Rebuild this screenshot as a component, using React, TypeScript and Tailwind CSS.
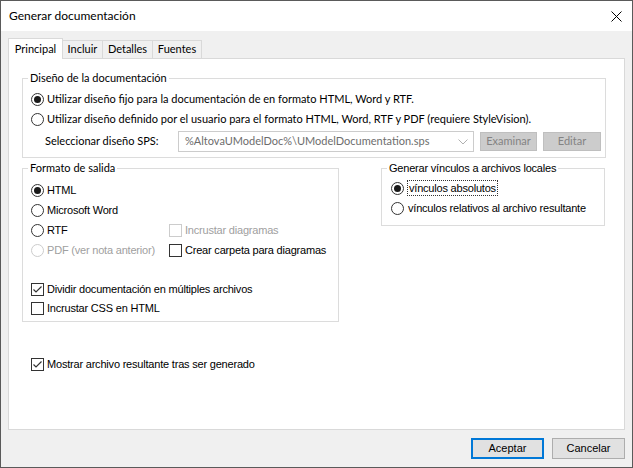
const seg = "font-['Lato',sans-serif] text-[11px]";
const ms = "font-['Liberation_Sans',Arial,sans-serif] text-[11px] tracking-[-0.2px]";

function Radio({ checked = false, disabled = false }: { checked?: boolean; disabled?: boolean }) {
  return (
    <span
      className={`flex items-center justify-center w-[13px] h-[13px] rounded-full border bg-white shrink-0 ${
        disabled ? "border-[#cccccc]" : "border-[#333333]"
      }`}
    >
      {checked && <span className="w-[7px] h-[7px] rounded-full bg-[#1a1a1a]" />}
    </span>
  );
}

function Check({ checked = false, disabled = false }: { checked?: boolean; disabled?: boolean }) {
  return (
    <span
      className={`flex items-center justify-center w-[13px] h-[13px] border bg-white shrink-0 ${
        disabled ? "border-[#cccccc]" : "border-[#333333]"
      }`}
    >
      {checked && (
        <svg width="11" height="11" viewBox="0 0 11 11">
          <path d="M1.5 5.5 L4 8 L9.5 2.5" fill="none" stroke="#333" strokeWidth="1.2" />
        </svg>
      )}
    </span>
  );
}

function Group({
  title,
  font = seg,
  className,
  children,
}: {
  title: string;
  font?: string;
  className: string;
  children: React.ReactNode;
}) {
  return (
    <div className={`relative border border-[#dcdcdc] ${className}`}>
      <span className={`absolute left-[5px] top-[-10px] bg-white px-[2px] leading-[18px] text-black whitespace-nowrap ${font}`}>
        {title}
      </span>
      {children}
    </div>
  );
}

export default function App() {
  return (
    <div className="w-[633px] h-[468px] flex flex-col border border-[#5a5a5a] bg-[#f0f0f0] text-black">
      {/* Title bar */}
      <div className="h-[30px] bg-white flex items-center justify-between pl-[8px] pr-[10px] shrink-0">
        <span className="font-['Lato',sans-serif] text-[12px]">Generar documentación</span>
        <svg width="11" height="11" viewBox="0 0 11 11">
          <path d="M0.5 0.5 L10.5 10.5 M10.5 0.5 L0.5 10.5" stroke="#000" strokeWidth="1" />
        </svg>
      </div>

      <div className="flex flex-col pl-[7px] pt-[7px]">
        {/* Tabs */}
        <div className={`flex items-end h-[20px] ${seg}`}>
          <div className="relative z-10 mb-[-1px] h-[21px] w-[55px] bg-white border border-b-0 border-[#d9d9d9] flex items-center justify-center">
            Principal
          </div>
          <div className="h-[18px] w-[40px] border border-l-0 border-b-0 border-[#d9d9d9] flex items-center justify-center">
            Incluir
          </div>
          <div className="h-[18px] w-[50px] border border-l-0 border-b-0 border-[#d9d9d9] flex items-center justify-center">
            Detalles
          </div>
          <div className="h-[18px] w-[49px] border border-l-0 border-b-0 border-[#d9d9d9] flex items-center justify-center">
            Fuentes
          </div>
        </div>

        {/* Panel */}
        <div className="w-[617px] h-[372px] bg-white border border-[#d9d9d9] flex flex-col pl-[13px] pt-[19px]">
          <Group title="Diseño de la documentación" className="w-[584px] h-[80px] pt-[10px] pl-[8px]">
            <div className={`flex flex-col ${seg}`}>
              <label className="h-[20px] flex items-center gap-[3px] whitespace-nowrap">
                <Radio checked />
                <span>Utilizar diseño fijo para la documentación de en formato HTML, Word y RTF.</span>
              </label>
              <label className="h-[20px] flex items-center gap-[3px] whitespace-nowrap">
                <Radio />
                <span>Utilizar diseño definido por el usuario para el formato HTML, Word, RTF y PDF (requiere StyleVision).</span>
              </label>
              <div className="mt-[2px] h-[21px] flex items-center pl-[14px] whitespace-nowrap">
                <span className="w-[133px]">Seleccionar diseño SPS:</span>
                <div className="w-[296px] h-[21px] border border-[#cccccc] bg-white flex items-center justify-between pl-[6px] pr-[5px] text-[#6d6d6d]">
                  <span>%AltovaUModelDoc%\UModelDocumentation.sps</span>
                  <svg width="10" height="6" viewBox="0 0 10 6">
                    <path d="M0.5 0.5 L5 5 L9.5 0.5" fill="none" stroke="#b0b0b0" strokeWidth="1" />
                  </svg>
                </div>
                <div className="ml-[6px] w-[57px] h-[19px] border border-[#bfbfbf] bg-[#cccccc] text-[#838383] flex items-center justify-center">
                  Examinar
                </div>
                <div className="ml-[6px] w-[58px] h-[19px] border border-[#bfbfbf] bg-[#cccccc] text-[#838383] flex items-center justify-center">
                  Editar
                </div>
              </div>
            </div>
          </Group>

          <div className="flex items-start mt-[10px] gap-[42px]">
            <Group title="Formato de salida" className="w-[317px] h-[154px] pt-[11px] pl-[8px]">
              <div className={`grid grid-cols-[138px_1fr] whitespace-nowrap ${ms}`}>
                <label className="h-[20px] flex items-center gap-[3px]">
                  <Radio checked />
                  <span>HTML</span>
                </label>
                <div />
                <label className="h-[20px] flex items-center gap-[3px]">
                  <Radio />
                  <span>Microsoft Word</span>
                </label>
                <div />
                <label className="h-[20px] flex items-center gap-[3px]">
                  <Radio />
                  <span>RTF</span>
                </label>
                <label className="h-[20px] flex items-center gap-[3px] text-[#a0a0a0]">
                  <Check disabled />
                  <span>Incrustar diagramas</span>
                </label>
                <label className="h-[20px] flex items-center gap-[3px] text-[#a0a0a0]">
                  <Radio disabled />
                  <span>PDF (ver nota anterior)</span>
                </label>
                <label className="h-[20px] flex items-center gap-[3px]">
                  <Check />
                  <span>Crear carpeta para diagramas</span>
                </label>
              </div>
              <div className={`flex flex-col mt-[19px] whitespace-nowrap ${ms}`}>
                <label className="h-[20px] flex items-center gap-[3px]">
                  <Check checked />
                  <span>Dividir documentación en múltiples archivos</span>
                </label>
                <label className="h-[19px] flex items-center gap-[3px]">
                  <Check />
                  <span>Incrustar CSS en HTML</span>
                </label>
              </div>
            </Group>

            <Group
              title="Generar vínculos a archivos locales"
              font={ms}
              className="w-[224px] h-[58px] pt-[9px] pl-[9px]"
            >
              <div className={`flex flex-col whitespace-nowrap ${ms}`}>
                <label className="h-[20px] flex items-center gap-[3px]">
                  <Radio checked />
                  <span className="border border-dotted border-[#333] px-[1px] leading-[14px]">vínculos absolutos</span>
                </label>
                <label className="h-[20px] flex items-center gap-[4px]">
                  <Radio />
                  <span>vínculos relativos al archivo resultante</span>
                </label>
              </div>
            </Group>
          </div>

          <label className={`mt-[32px] ml-[9px] h-[20px] flex items-center gap-[3px] ${ms}`}>
            <Check checked />
            <span>Mostrar archivo resultante tras ser generado</span>
          </label>
        </div>

        {/* Buttons */}
        <div className="flex justify-end gap-[8px] mt-[8px] w-[617px] font-['Liberation_Sans',Arial,sans-serif] text-[11px]">
          <button className="w-[73px] h-[21px] bg-[#e1e1e1] border-2 border-[#0078d7] flex items-center justify-center">
            Aceptar
          </button>
          <button className="w-[73px] h-[21px] bg-[#e1e1e1] border border-[#adadad] flex items-center justify-center">
            Cancelar
          </button>
        </div>
      </div>
    </div>
  );
}
